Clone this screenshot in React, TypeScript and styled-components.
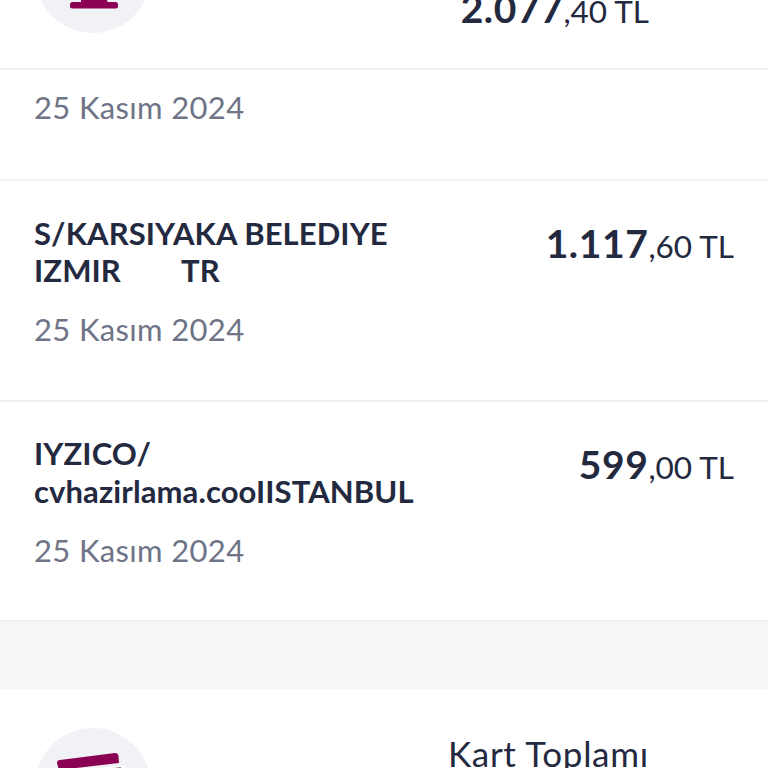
/*
  Card statement, scrolled list of transactions.
*/

import styled, { createGlobalStyle } from 'styled-components'

const GlobalStyle = createGlobalStyle`
  html, body {
    margin: 0;
    padding: 0;
    background: #fff;
  }
`

const Viewport = styled.div`
  height: 768px;
  overflow: hidden;
  font-family: Lato, "Noto Sans", sans-serif;
  color: #23293f;
  background: #fff;
`

const Page = styled.div`
  margin-top: -122px;
`

const Summary = styled.section`
  display: flex;
  align-items: flex-start;
  padding: 39px 35px 36px;
  height: 192px;
  box-sizing: border-box;
  border-bottom: 2px solid #f1f2f4;
`

const Badge = styled.div`
  width: 116px;
  height: 116px;
  border-radius: 50%;
  background: #f1f2f5;
  flex: none;

  svg {
    display: block;
  }
`

const SummaryText = styled.div`
  margin-left: 297px;
  width: 201px;
  display: flex;
  flex-direction: column;
`

const SummaryLabel = styled.div`
  font-size: 35px;
  line-height: 38px;
  margin-top: 6px;
  white-space: nowrap;
  letter-spacing: 0.7px;
`

const SummaryAmount = styled.div`
  text-align: right;
  margin-top: 24px;
  white-space: nowrap;
`

const Row = styled.article<{ $compact?: boolean }>`
  display: flex;
  justify-content: space-between;
  align-items: flex-start;
  box-sizing: border-box;
  height: ${p => (p.$compact ? '111px' : '220.5px')};
  padding: ${p => (p.$compact ? '18px' : '33.5px')} 34px 0 34px;
  border-bottom: 2px solid #f1f2f4;
`

const Details = styled.div`
  display: flex;
  flex-direction: column;
  gap: 20.5px;
`

const Merchant = styled.div`
  font-size: 31px;
  line-height: 37.5px;
  font-weight: 700;
  letter-spacing: 0.1px;
  white-space: pre;
`

const DateText = styled.div`
  font-size: 31px;
  line-height: 38px;
  color: #6f7487;
  letter-spacing: 0.35px;
`

const Whole = styled.span`
  font-size: 39px;
  font-weight: 700;
  letter-spacing: 0.6px;
`

const Cents = styled.span`
  font-size: 31.5px;
`

const Price = styled.div`
  line-height: 50px;
  margin-top: 3.5px;
  white-space: nowrap;
`

const Gap = styled.div`
  height: 66.5px;
  background: #f6f7f9;
`

const Amount = ({ whole, cents }: { whole: string; cents: string }): JSX.Element => (
  <>
    <Whole>{whole}</Whole>
    <Cents>,{cents} TL</Cents>
  </>
)

const rows = [
  { merchant: 'S/KARSIYAKA BELEDIYE\nIZMIR        TR', whole: '1.117', cents: '60' },
  { merchant: 'IYZICO/\ncvhazirlama.cooIISTANBUL', whole: '599', cents: '00' },
]

const App = (): JSX.Element => (
  <Viewport>
    <GlobalStyle />
    <Page>
      <Summary>
        <Badge>
          <svg width="116" height="116" viewBox="0 0 116 116">
            <path d="M46 80 H71 L73 86 H46 Z" fill="#8a0052" />
            <rect x="35" y="85" width="48" height="6.5" rx="2.5" fill="#8a0052" />
          </svg>
        </Badge>
        <SummaryText>
          <SummaryLabel>Kart Toplamı</SummaryLabel>
          <SummaryAmount>
            <Amount whole="2.077" cents="40" />
          </SummaryAmount>
        </SummaryText>
      </Summary>

      <Row $compact>
        <DateText>25 Kasım 2024</DateText>
      </Row>

      {rows.map(row => (
        <Row key={row.whole}>
          <Details>
            <Merchant>{row.merchant}</Merchant>
            <DateText>25 Kasım 2024</DateText>
          </Details>
          <Price>
            <Amount whole={row.whole} cents={row.cents} />
          </Price>
        </Row>
      ))}

      <Gap />

      <Summary>
        <Badge>
          <svg width="116" height="116" viewBox="0 0 116 116">
            <path d="M30 44 L90 37 L92 44 L32 50 Z" fill="#ffffff" />
            <path d="M76 41 L86 40" stroke="#4a4a55" strokeWidth="1.5" />
            <path d="M25 32 L80 25 Q83 25 83.5 28 L84 35 L24 42 L22 35 Q22 32 25 32 Z" fill="#8a0052" />
          </svg>
        </Badge>
        <SummaryText>
          <SummaryLabel>Kart Toplamı</SummaryLabel>
        </SummaryText>
      </Summary>
    </Page>
  </Viewport>
)

export default App
